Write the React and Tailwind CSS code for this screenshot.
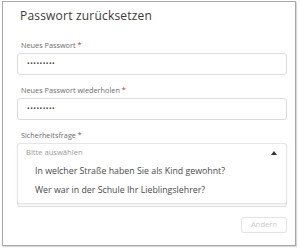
export default function App() {
  const font = { fontFamily: '"Open Sans", "Liberation Sans", sans-serif' };
  return (
    <div className="w-[300px] h-[249px] bg-white pl-[2px] pt-[1px]" style={font}>
      <div className="w-[294px] h-[245px] border border-[#a8a8a8] bg-white shadow-[1px_1px_1px_rgba(0,0,0,0.15)] flex flex-col pl-[14px] pr-[8px]">
        <div className="pl-[3px] pt-[6px] text-[12px] leading-[16px] text-[#3a3a3a] tracking-[0.2px]">Passwort zurücksetzen</div>
        <div className="pl-[4px] mt-[16px] text-[7.3px] leading-[10px] text-[#6b6b6b]">
          Neues Passwort <span className="text-[#c0392b]">*</span>
        </div>
        <div className="mt-[3px] h-[22px] border border-[#dcdcdc] rounded-[3px] flex items-center pl-[9px] text-[7px] text-[#444] tracking-[0.5px]">
          •••••••••
        </div>
        <div className="pl-[4px] mt-[10px] text-[7.3px] leading-[10px] text-[#6b6b6b]">
          Neues Passwort wiederholen <span className="text-[#c0392b]">*</span>
        </div>
        <div className="mt-[3px] h-[22px] border border-[#dcdcdc] rounded-[3px] flex items-center pl-[9px] text-[7px] text-[#444] tracking-[0.5px]">
          •••••••••
        </div>
        <div className="pl-[4px] mt-[10px] text-[7.3px] leading-[10px] text-[#6b6b6b]">
          Sicherheitsfrage <span className="text-[#c0392b]">*</span>
        </div>
        <div className="mt-[3px] relative h-[64px]">
          <div className="absolute inset-x-0 top-0 h-[64px] border border-[#e0e0e0] rounded-[3px]"></div>
          <div className="absolute inset-x-0 top-0 h-[61px] border border-[#e6e6e6] rounded-[3px] bg-white shadow-[0_1px_2px_rgba(0,0,0,0.08)] flex flex-col">
            <div className="flex items-center justify-between h-[18px] pl-[8px] pr-[9px] text-[7.6px] text-[#9a9a9a]">
              <span>Bitte auswählen</span>
              <svg width="6" height="4" viewBox="0 0 6 4"><path d="M0 4 L3 0 L6 4 Z" fill="#333" /></svg>
            </div>
            <div className="pl-[17px] h-[19px] flex items-center text-[8.8px] text-[#4a4a4a]">In welcher Straße haben Sie als Kind gewohnt?</div>
            <div className="pl-[17px] h-[19px] flex items-center text-[8.8px] text-[#4a4a4a]">Wer war in der Schule Ihr Lieblingslehrer?</div>
          </div>
        </div>
        <div className="flex justify-end mt-[10px]">
          <div className="w-[46px] h-[16px] border border-[#e2e2e2] rounded-[3px] flex items-center justify-center text-[7.6px] text-[#c8c8c8]">Ändern</div>
        </div>
      </div>
    </div>
  );
}
